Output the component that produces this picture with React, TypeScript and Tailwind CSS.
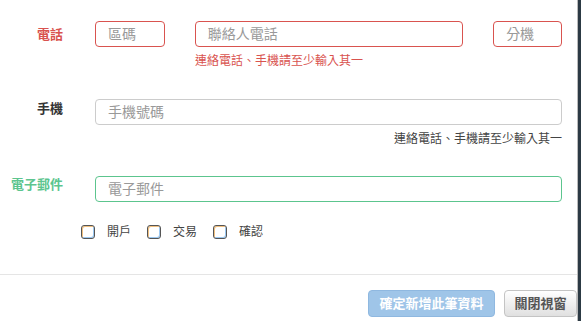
const font = { fontFamily: '"Liberation Sans", "Noto Sans CJK TC", sans-serif' };

const Field = ({
    placeholder,
    className,
}: {
    placeholder: string;
    className: string;
}) => (
    <div
        className={`h-[26px] rounded-[4px] border bg-white px-3 flex items-center text-[14px] text-[#999] ${className}`}
    >
        {placeholder}
    </div>
);

const Check = ({ label }: { label: string }) => (
    <div className="flex items-center">
        <span className="w-[14px] h-[14px] rounded-[3px] border border-[#555] shadow-[inset_1px_1px_0_#f0c080,inset_-1px_-1px_0_#9cc8f0]" />
        <span className="ml-[12px] text-[12px] text-[#444] leading-[14px]">
            {label}
        </span>
    </div>
);

const App = () => {
    return (
        <div className="flex w-[581px] h-[321px] overflow-hidden" style={font}>
            <div className="w-[578px] h-full bg-white flex flex-col border-r border-[#bbb]">
                <div className="pt-[21px]">
                    <div className="flex">
                        <div className="w-[63px] pt-[7px] text-right text-[13px] font-bold text-[#d9534f] leading-[14px]">
                            電話
                        </div>
                        <div className="ml-[32px] w-[467px]">
                            <div className="flex gap-[30px]">
                                <Field
                                    placeholder="區碼"
                                    className="w-[70px] border-[#d9534f]"
                                />
                                <Field
                                    placeholder="聯絡人電話"
                                    className="w-[269px] border-[#d9534f]"
                                />
                                <Field
                                    placeholder="分機"
                                    className="w-[69px] border-[#d9534f]"
                                />
                            </div>
                            <p className="mt-[7px] ml-[100px] text-[12px] leading-[14px] text-[#d9534f]">
                                連絡電話、手機請至少輸入其一
                            </p>
                        </div>
                    </div>

                    <div className="flex mt-[31px]">
                        <div className="w-[63px] pt-[3px] text-right text-[13px] font-bold text-[#333] leading-[14px]">
                            手機
                        </div>
                        <div className="ml-[32px] w-[467px]">
                            <Field
                                placeholder="手機號碼"
                                className="w-full border-[#ccc]"
                            />
                            <p className="mt-[7px] text-right text-[12px] leading-[14px] text-[#444]">
                                連絡電話、手機請至少輸入其一
                            </p>
                        </div>
                    </div>

                    <div className="flex mt-[30px]">
                        <div className="w-[63px] pt-[2px] text-right text-[13px] font-bold text-[#5cc58e] leading-[14px]">
                            電子郵件
                        </div>
                        <div className="ml-[32px] w-[467px]">
                            <Field
                                placeholder="電子郵件"
                                className="w-full border-[#5cc58e]"
                            />
                        </div>
                    </div>

                    <div className="flex mt-[23px] pl-[81px] gap-[16px]">
                        <Check label="開戶" />
                        <Check label="交易" />
                        <Check label="確認" />
                    </div>
                </div>

                <div className="mt-[35px] border-t border-[#e5e5e5]" />

                <div className="flex justify-end gap-[9px] mt-[15px]">
                    <button className="h-[27px] w-[127px] rounded-[4px] border border-[#8fb8e0] bg-[#9fc5e8] text-white text-[13px] font-bold">
                        確定新增此筆資料
                    </button>
                    <button className="h-[27px] w-[73px] rounded-[4px] border border-[#c4c4c4] bg-gradient-to-b from-white to-[#e0e0e0] text-[#555] text-[13px] font-bold">
                        關閉視窗
                    </button>
                </div>
            </div>
            <div className="flex-1 bg-[#2c3a44]" />
        </div>
    );
};

export default App;
